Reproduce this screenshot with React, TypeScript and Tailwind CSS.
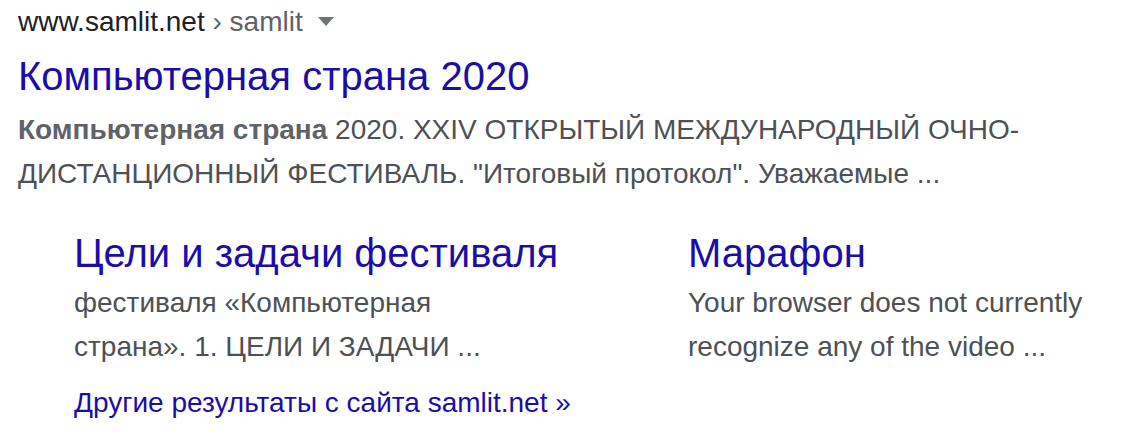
const sitelinks = [
  {
    title: "Цели и задачи фестиваля",
    snippet: "фестиваля «Компьютерная страна». 1. ЦЕЛИ И ЗАДАЧИ ...",
  },
  {
    title: "Марафон",
    snippet: "Your browser does not currently recognize any of the video ...",
  },
]

export default function App() {
  return (
    <div className="min-h-[436px] bg-white px-[18px] font-['Liberation_Sans',Arial,sans-serif]">
      <div className="flex items-center pt-[2px] text-[28px] leading-[40px]">
        <span className="text-[#202124]">www.samlit.net</span>
        <span className="text-[#5f6368]">&nbsp;› samlit</span>
        <span className="ml-[15px] mt-[-2px] h-0 w-0 border-x-[8px] border-t-[9px] border-x-transparent border-t-[#70757a]" />
      </div>

      <h3 className="mt-[8px] text-[40px] leading-[52px] text-[#1a0dab]">Компьютерная страна 2020</h3>

      <div className="mt-[6px] max-w-[1010px] text-[28px] leading-[44px] text-[#4d5156]">
        <span className="font-bold text-[#5f6368]">Компьютерная страна</span> 2020. XXIV ОТКРЫТЫЙ МЕЖДУНАРОДНЫЙ ОЧНО-ДИСТАНЦИОННЫЙ ФЕСТИВАЛЬ. "Итоговый протокол". Уважаемые ...
      </div>

      <div className="mt-[31px] pl-[56px]">
        <div className="grid grid-cols-[614px_1fr]">
          {sitelinks.map((s) => (
            <div key={s.title}>
              <div className="text-[40px] leading-[52px] text-[#1a0dab]">{s.title}</div>
              <div className="mt-[2px] max-w-[440px] text-[28px] leading-[44px] text-[#4d5156]">{s.snippet}</div>
            </div>
          ))}
        </div>
        <div className="mt-[12px] text-[28px] leading-[44px] text-[#1a0dab]">Другие результаты с сайта samlit.net »</div>
      </div>
    </div>
  )
}
